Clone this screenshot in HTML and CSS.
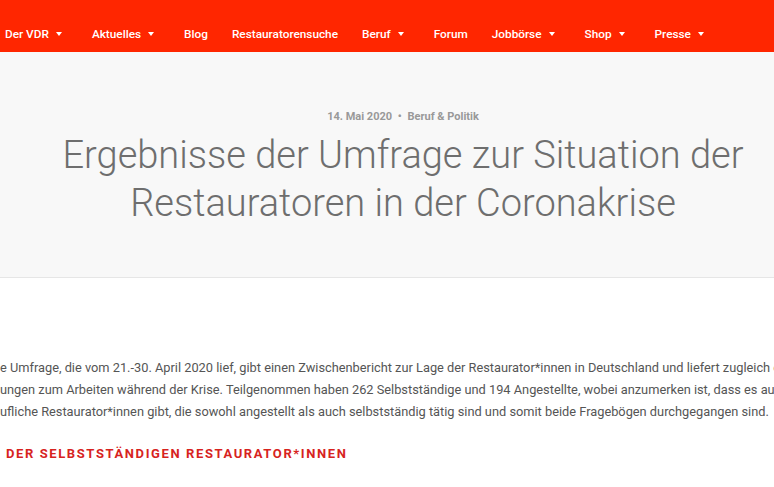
FILE: index.html
```html
<!DOCTYPE html>
<html>
<head>
    <meta name="viewport" content="width=device-width, initial-scale=1.0">
    <title>Ergebnisse der Umfrage - VDR</title>
    <link rel="stylesheet" href="styles.css">
</head>
<body>
    <!-- top navigation -->
    <div class="topnav">
        <ul class="menu">
            <li><a>Der VDR</a><span class="caret"></span></li>
            <li><a>Aktuelles</a><span class="caret"></span></li>
            <li><a>Blog</a></li>
            <li><a>Restauratorensuche</a></li>
            <li><a>Beruf</a><span class="caret"></span></li>
            <li><a>Forum</a></li>
            <li><a>Jobbörse</a><span class="caret"></span></li>
            <li><a>Shop</a><span class="caret"></span></li>
            <li><a>Presse</a><span class="caret"></span></li>
        </ul>
    </div>

    <div class="hero">
        <div class="hero-inner">
            <p class="meta">14. Mai 2020 <span class="dot">&bull;</span> Beruf &amp; Politik</p>
            <h1 class="title">Ergebnisse der Umfrage zur Situation der<br>Restauratoren in der Coronakrise</h1>
        </div>
    </div>

    <div class="content">
        <p class="intro">
            <span class="ln">e Umfrage, die vom 21.-30. April 2020 lief, gibt einen Zwischenbericht zur Lage der Restaurator*innen in Deutschland und liefert zugleich e</span>
            <span class="ln">ungen zum Arbeiten während der Krise. Teilgenommen haben 262 Selbstständige und 194 Angestellte, wobei anzumerken ist, dass es auc</span>
            <span class="ln">ufliche Restaurator*innen gibt, die sowohl angestellt als auch selbstständig tätig sind und somit beide Fragebögen durchgegangen sind.</span>
        </p>
        <h2 class="sub">DER SELBSTSTÄNDIGEN RESTAURATOR*INNEN</h2>
    </div>
</body>
</html>
```

FILE: styles.css
```css
html, body {
    margin: 0;
    padding: 0;
    overflow: hidden;
    background: #ffffff;
    font-family: Roboto, "Liberation Sans", sans-serif;
}

.topnav {
    background-color: #ff2600;
    height: 52px;
    box-sizing: border-box;
    padding-top: 16px;
    display: flex;
    align-items: center;
}
.menu {
    list-style: none;
    margin: 0 0 0 -7px;
    padding: 0;
    display: flex;
    align-items: center;
}
.menu li {
    display: flex;
    align-items: center;
    padding: 0 12px;
    color: #ffffff;
    font-size: 11.8px;
    font-weight: 500;
}
.menu a {
    cursor: pointer;
}
.caret {
    width: 0;
    height: 0;
    margin-left: 7px;
    margin-right: 6px;
    border-left: 3.5px solid transparent;
    border-right: 3.5px solid transparent;
    border-top: 4px solid #ffffff;
}

.hero {
    background-color: #f8f8f8;
    height: 225px;
    border-bottom: 1px solid #e6e6e6;
}
.hero-inner {
    padding: 57px 0 0 32px;
    text-align: center;
}
.meta {
    margin: 0;
    font-size: 11px;
    font-weight: 700;
    color: #999999;
    line-height: 16px;
}
.meta .dot {
    margin: 0 3px;
}
.title {
    margin: 6px 0 0;
    font-size: 38px;
    font-weight: 300;
    line-height: 48px;
    color: #6e6e6e;
}

.content {
    padding-top: 79px;
}
.intro {
    margin: 0;
    font-size: 12.8px;
    line-height: 22px;
    color: #555555;
}
.ln {
    display: block;
    white-space: nowrap;
}
.sub {
    margin: 23px 0 0;
    padding-left: 6px;
    font-size: 13px;
    font-weight: 700;
    letter-spacing: 1.6px;
    color: #d7231e;
    white-space: nowrap;
}
```
